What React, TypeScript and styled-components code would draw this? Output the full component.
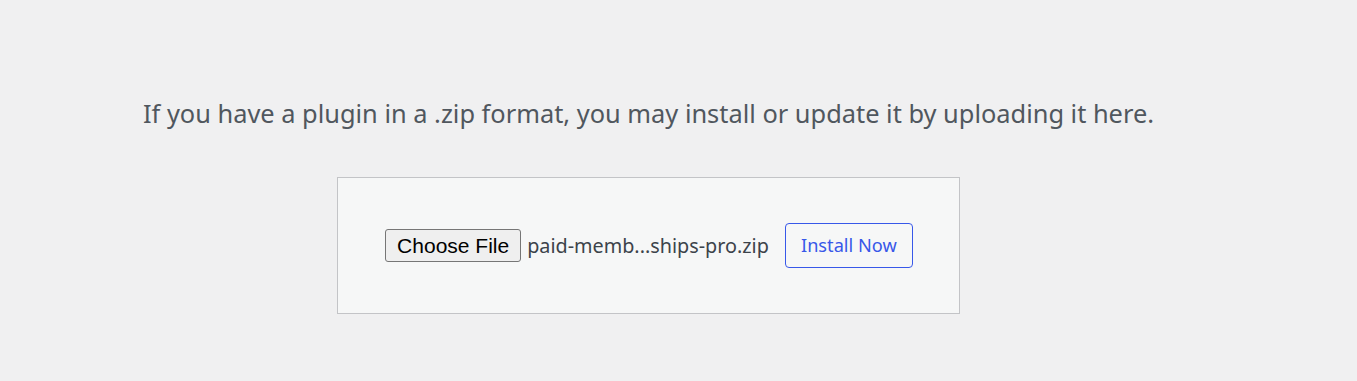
import React from "react";
import styled, { createGlobalStyle } from "styled-components";

const Global = createGlobalStyle`
  html, body { margin: 0; padding: 0; background: #f0f0f1; }
  body { width: 1357px; height: 381px; overflow: hidden; font-family: "Noto Sans", "Open Sans", sans-serif; }
`;

const Page = styled.div`
  width: 1297px;
  padding-top: 94px;
  text-align: center;
`;

const Help = styled.p`
  margin: 0;
  font-size: 25.4px;
  line-height: 38px;
  color: #50575e;
`;

const Form = styled.form`
  display: inline-flex;
  align-items: center;
  margin-top: 45px;
  padding: 45px 46px 45px 47px;
  background: #f6f7f7;
  border: 1px solid #c3c4c7;
`;

const ChooseButton = styled.span`
  box-sizing: border-box;
  display: inline-flex;
  align-items: center;
  justify-content: center;
  width: 136px;
  height: 33px;
  background: #efefef;
  border: 1px solid #767676;
  border-radius: 3px;
  font-family: "Liberation Sans", Arial, sans-serif;
  font-size: 21px;
  color: #000;
`;

const FileName = styled.span`
  margin-left: 6px;
  font-size: 19.8px;
  color: #3c434a;
`;

const InstallButton = styled.button`
  box-sizing: border-box;
  margin-left: 16px;
  width: 128px;
  height: 45px;
  padding: 0 0 1px;
  background: #f6f7f7;
  border: 1px solid #3858e9;
  border-radius: 4px;
  color: #3858e9;
  font-family: "Noto Sans", "Open Sans", sans-serif;
  font-size: 18.2px;
  cursor: pointer;
`;

export default function App() {
  return (
    <>
      <Global />
      <Page>
        <Help>If you have a plugin in a .zip format, you may install or update it by uploading it here.</Help>
        <Form onSubmit={(e) => e.preventDefault()}>
          <ChooseButton>Choose File</ChooseButton>
          <FileName>paid-memb...ships-pro.zip</FileName>
          <InstallButton type="submit">Install Now</InstallButton>
        </Form>
      </Page>
    </>
  );
}
